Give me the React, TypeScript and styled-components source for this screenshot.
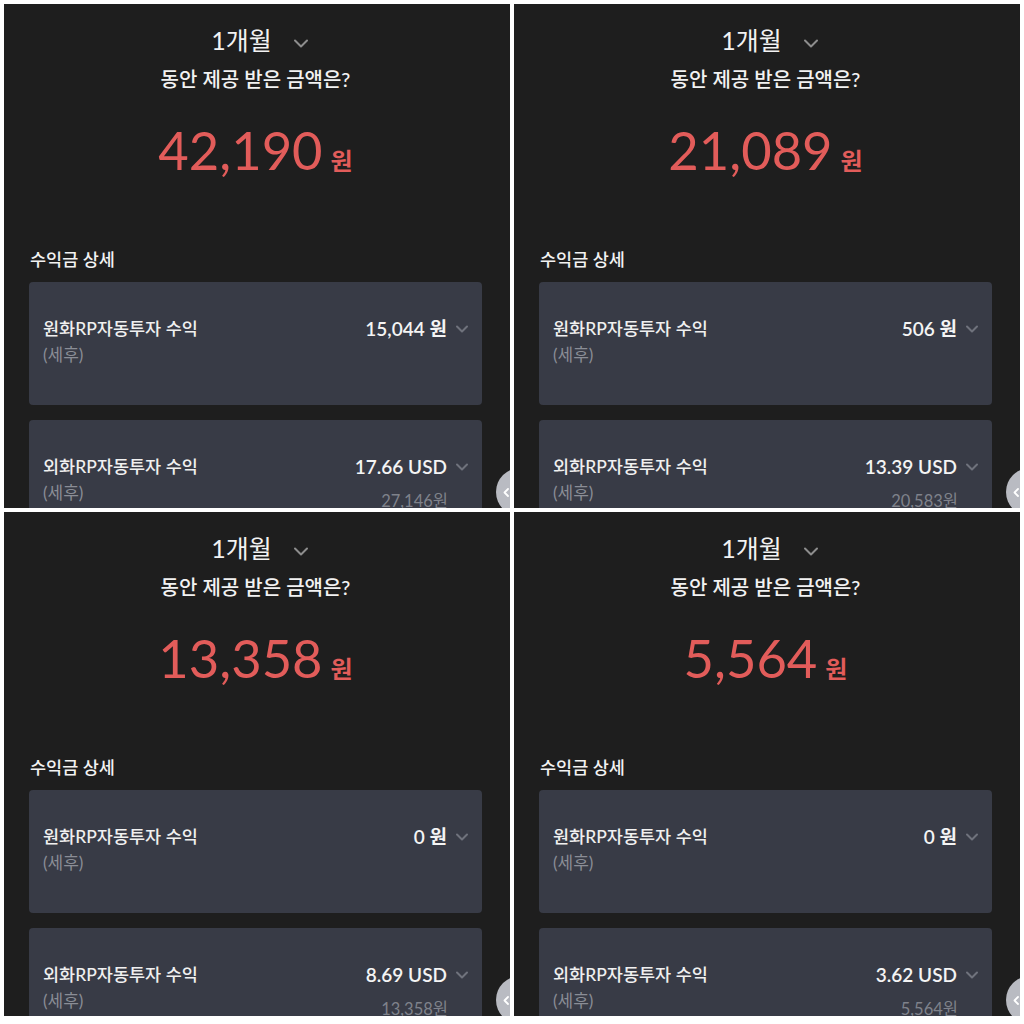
import React from 'react'
import styled, { createGlobalStyle } from 'styled-components'

const GlobalStyle = createGlobalStyle`
  html, body {
    margin: 0;
    padding: 0;
    background: #ffffff;
  }
  body {
    font-family: Lato, 'Noto Sans CJK KR', sans-serif;
  }
`

const Grid = styled.div`
  display: grid;
  grid-template-columns: 506px 506px;
  grid-template-rows: 504px 504px;
  gap: 4px;
  padding: 4px;
  width: 1024px;
  height: 1024px;
  box-sizing: border-box;
`

const Screen = styled.section`
  position: relative;
  overflow: hidden;
  display: flex;
  flex-direction: column;
  padding: 0 28px 0 25px;
  background: #1e1e1e;
  color: #f1f1f1;
`

const PeriodRow = styled.div`
  display: flex;
  justify-content: center;
  align-items: center;
  gap: 22px;
  height: 30px;
  margin-top: 21px;
  padding-left: 8px;
  font-size: 25px;
  line-height: 30px;
  color: #f2f2f2;

  svg {
    margin-top: 6px;
  }
`

const Question = styled.div`
  margin-top: 12px;
  text-align: center;
  font-size: 20px;
  font-weight: 500;
  line-height: 24px;
  color: #f2f2f2;
`

const Amount = styled.div`
  display: flex;
  justify-content: center;
  align-items: baseline;
  gap: 8px;
  margin-top: 27px;
  height: 64px;
  line-height: 64px;
  color: #e25c5a;

  strong {
    font-size: 52.5px;
    font-weight: 400;
  }
  span {
    font-size: 24px;
    font-weight: 700;
  }
`

const SectionTitle = styled.h3`
  margin: 66px 0 10px 1px;
  font-size: 17.5px;
  font-weight: 500;
  line-height: 24px;
  color: #f2f2f2;
`

const Card = styled.div`
  flex: none;
  display: grid;
  grid-template-columns: 1fr auto;
  height: 123px;
  margin-bottom: 15px;
  padding: 34px 14px 0 14px;
  box-sizing: border-box;
  border-radius: 4px;
  background: #383b46;
`

const CardTitle = styled.div`
  font-size: 17.5px;
  font-weight: 500;
  line-height: 26px;
  color: #f0f0f0;
`

const Note = styled.div`
  font-size: 17px;
  line-height: 26px;
  color: #8a8d96;
`

const ValueRow = styled.div`
  display: flex;
  align-items: center;
  justify-content: flex-end;
  gap: 9px;
  font-size: 19px;
  font-weight: 600;
  line-height: 26px;
  color: #f4f4f4;
`

const Converted = styled.div`
  margin: 8px 20px 0 0;
  text-align: right;
  font-size: 16.5px;
  line-height: 26px;
  color: #7f828b;
`

const Handle = styled.div`
  position: absolute;
  left: 492px;
  top: 464px;
  width: 48px;
  height: 48px;
  border-radius: 50%;
  background: #b9bbc2;

  svg {
    position: absolute;
    left: 7px;
    top: 20px;
  }
`

const Chevron = ({ w, h, color }: { w: number; h: number; color: string }) => (
  <svg width={w} height={h} viewBox={`0 0 ${w} ${h}`} fill="none">
    <path d={`M1 1.5 L${w / 2} ${h - 1.5} L${w - 1} 1.5`} stroke={color} strokeWidth="2" strokeLinecap="round" strokeLinejoin="round" />
  </svg>
)

const screens = [
  { total: '42,190', krw: '15,044', usd: '17.66', usdKrw: '27,146' },
  { total: '21,089', krw: '506', usd: '13.39', usdKrw: '20,583' },
  { total: '13,358', krw: '0', usd: '8.69', usdKrw: '13,358' },
  { total: '5,564', krw: '0', usd: '3.62', usdKrw: '5,564' }
]

function App () {
  return (
    <>
      <GlobalStyle />
      <Grid>
        {screens.map((s, i) => (
          <Screen key={i}>
            <PeriodRow>
              <span>1개월</span>
              <Chevron w={14} h={9} color="#8d8d8d" />
            </PeriodRow>
            <Question>동안 제공 받은 금액은?</Question>
            <Amount>
              <strong>{s.total}</strong>
              <span>원</span>
            </Amount>
            <SectionTitle>수익금 상세</SectionTitle>
            <Card>
              <div>
                <CardTitle>원화RP자동투자 수익</CardTitle>
                <Note>(세후)</Note>
              </div>
              <div>
                <ValueRow>
                  <span>{s.krw} 원</span>
                  <Chevron w={12} h={8} color="#6f727c" />
                </ValueRow>
              </div>
            </Card>
            <Card>
              <div>
                <CardTitle>외화RP자동투자 수익</CardTitle>
                <Note>(세후)</Note>
              </div>
              <div>
                <ValueRow>
                  <span>{s.usd} USD</span>
                  <Chevron w={12} h={8} color="#6f727c" />
                </ValueRow>
                <Converted>{s.usdKrw}원</Converted>
              </div>
            </Card>
            <Handle>
              <svg width="6" height="9" viewBox="0 0 6 9" fill="none">
                <path d="M5 1 L1.5 4.5 L5 8" stroke="#ffffff" strokeWidth="1.8" strokeLinecap="round" strokeLinejoin="round" />
              </svg>
            </Handle>
          </Screen>
        ))}
      </Grid>
    </>
  )
}

export default App
